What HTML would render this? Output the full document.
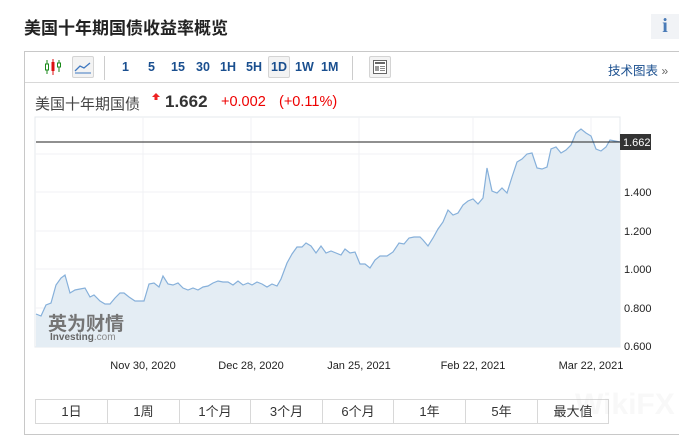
<!DOCTYPE html>
<html><head><meta charset="utf-8"><style>
*{margin:0;padding:0;box-sizing:border-box}
body{width:679px;height:438px;background:#fff;font-family:"Liberation Sans","Noto Sans CJK SC",sans-serif;position:relative;overflow:hidden;color:#333}
.a{position:absolute;white-space:nowrap}
.title{left:24px;top:14px;font-size:17px;font-weight:bold;color:#222}
.info{left:651px;top:14px;width:28px;height:25px;background:#f1f3f6;color:#4a7bb7;font-family:"Liberation Serif",serif;font-size:20px;font-weight:bold;text-align:center;line-height:25px}
.box{left:24px;top:51px;width:656px;height:384px;border:1px solid #c8c8c8}
.tb{left:25px;top:82px;width:654px;height:1px;background:#d8d8d8}
.n{top:60px;font-size:12.5px;font-weight:bold;color:#1a4f8f}
.btn{border:1px solid #d4d4d4;background:#f3f3f3;border-radius:2px}
.sep{width:1px;background:#ccc;top:56px;height:24px}
.q{top:93px;font-size:15px}
.bt{position:absolute;top:399px;height:25px;border:1px solid #d8d8d8;border-right:none;font-size:13px;text-align:center;line-height:23px;color:#333}
.dl{top:360px;font-size:11px;color:#222;transform:translateX(-50%)}
.yl{left:624px;font-size:11px;color:#222}
</style></head><body>
<div class="a title">美国十年期国债收益率概览</div>
<div class="a info">i</div>
<div class="a box"></div>
<div class="a tb"></div>
<svg class="a" style="left:44px;top:58px" width="18" height="18" viewBox="0 0 18 18">
<line x1="3" y1="2" x2="3" y2="16" stroke="#1a8a1a"/><rect x="1.5" y="6" width="3" height="6" fill="#fff" stroke="#1a8a1a"/>
<line x1="9" y1="1" x2="9" y2="17" stroke="#d11"/><rect x="7.5" y="4" width="3" height="9" fill="#d11"/>
<line x1="15" y1="2" x2="15" y2="14" stroke="#1a8a1a"/><rect x="13.5" y="5" width="3" height="4" fill="#fff" stroke="#1a8a1a"/></svg>
<div class="a btn" style="left:72px;top:56px;width:22px;height:22px"></div>
<svg class="a" style="left:74px;top:59px" width="18" height="16"><path d="M1 12 L6 7 L10 9 L16 4" stroke="#3f78c0" fill="none" stroke-width="1.3"/><line x1="1" y1="14" x2="17" y2="14" stroke="#3f78c0"/></svg>
<div class="a sep" style="left:104px"></div>
<div class="a n" style="left:122px">1</div>
<div class="a n" style="left:148px">5</div>
<div class="a n" style="left:171px">15</div>
<div class="a n" style="left:196px">30</div>
<div class="a n" style="left:220px">1H</div>
<div class="a n" style="left:246px">5H</div>
<div class="a btn" style="left:268px;top:56px;width:22px;height:22px"></div>
<div class="a n" style="left:271px">1D</div>
<div class="a n" style="left:295px">1W</div>
<div class="a n" style="left:321px">1M</div>
<div class="a sep" style="left:352px"></div>
<div class="a btn" style="left:369px;top:56px;width:22px;height:22px"></div>
<svg class="a" style="left:373px;top:60px" width="14" height="14"><rect x="0.5" y="0.5" width="13" height="13" fill="#fff" stroke="#666"/><rect x="2" y="2" width="10" height="2" fill="#666"/><rect x="2" y="6" width="4" height="5" fill="#999"/><line x1="7" y1="6.5" x2="12" y2="6.5" stroke="#888"/><line x1="7" y1="8.5" x2="12" y2="8.5" stroke="#888"/><line x1="7" y1="10.5" x2="12" y2="10.5" stroke="#888"/></svg>
<div class="a" style="left:608px;top:60px;font-size:12.5px;color:#1a4f8f">技术图表 <span style="color:#666;font-size:12px">»</span></div>
<div class="a q" style="left:35px;color:#444">美国十年期国债</div>
<svg class="a" style="left:152px;top:93px" width="8" height="8"><path d="M4 0 L8 4 L5.5 4 L5.5 7 L2.5 7 L2.5 4 L0 4Z" fill="#e22"/></svg>
<div class="a q" style="left:165px;top:92px;font-size:17px;font-weight:bold;color:#333">1.662</div>
<div class="a q" style="left:221px;color:#e00;top:94px;font-size:14.5px">+0.002</div>
<div class="a q" style="left:279px;color:#e00;top:94px;font-size:14.5px">(+0.11%)</div>
<svg class="a" style="left:0;top:0" width="679" height="438">
<rect x="35" y="117" width="585" height="230" fill="#fff" stroke="#e4e8ec"/>
<g stroke="#f0f2f4" stroke-width="1">
<line x1="35" y1="154" x2="620" y2="154"/><line x1="35" y1="192" x2="620" y2="192"/><line x1="35" y1="231" x2="620" y2="231"/><line x1="35" y1="269" x2="620" y2="269"/><line x1="35" y1="308" x2="620" y2="308"/>
<line x1="143" y1="117" x2="143" y2="347"/><line x1="251" y1="117" x2="251" y2="347"/><line x1="359" y1="117" x2="359" y2="347"/><line x1="473" y1="117" x2="473" y2="347"/><line x1="591" y1="117" x2="591" y2="347"/></g>
<path d="M36 314 L41 316 L46 305 L51 303 L56 285 L61 278 L65 275 L70 293 L75 290 L80 289 L85 288 L90 297 L94 295 L100 301 L105 304 L110 304 L115 298 L120 293 L124 293 L129 297 L135 301 L144 301 L149 284 L154 283 L159 287 L163 276 L168 284 L173 285 L178 283 L183 288 L188 290 L193 288 L198 290 L203 287 L208 286 L213 283 L218 281 L223 282 L228 282 L233 285 L238 281 L243 285 L248 283 L252 285 L257 282 L262 284 L267 287 L272 284 L277 286 L281 279 L287 263 L292 254 L297 247 L302 247 L306 243 L311 246 L316 253 L321 246 L326 253 L331 251 L336 253 L341 255 L345 249 L350 253 L355 252 L360 264 L365 264 L370 268 L375 260 L380 256 L387 256 L393 252 L399 243 L404 244 L409 238 L414 237 L420 237 L423 240 L428 246 L433 238 L438 229 L443 222 L448 210 L453 215 L458 213 L463 205 L468 201 L473 199 L478 204 L483 198 L487 168 L492 191 L497 193 L502 188 L507 193 L512 177 L517 162 L522 159 L527 154 L532 153 L537 168 L542 169 L547 167 L551 149 L556 147 L561 153 L566 150 L571 145 L576 133 L581 129 L586 133 L591 136 L596 149 L601 151 L606 147 L610 140 L615 141 L620 142 L620 347 L36 347Z" fill="#e4edf4" stroke="none"/>
<path d="M36 314 L41 316 L46 305 L51 303 L56 285 L61 278 L65 275 L70 293 L75 290 L80 289 L85 288 L90 297 L94 295 L100 301 L105 304 L110 304 L115 298 L120 293 L124 293 L129 297 L135 301 L144 301 L149 284 L154 283 L159 287 L163 276 L168 284 L173 285 L178 283 L183 288 L188 290 L193 288 L198 290 L203 287 L208 286 L213 283 L218 281 L223 282 L228 282 L233 285 L238 281 L243 285 L248 283 L252 285 L257 282 L262 284 L267 287 L272 284 L277 286 L281 279 L287 263 L292 254 L297 247 L302 247 L306 243 L311 246 L316 253 L321 246 L326 253 L331 251 L336 253 L341 255 L345 249 L350 253 L355 252 L360 264 L365 264 L370 268 L375 260 L380 256 L387 256 L393 252 L399 243 L404 244 L409 238 L414 237 L420 237 L423 240 L428 246 L433 238 L438 229 L443 222 L448 210 L453 215 L458 213 L463 205 L468 201 L473 199 L478 204 L483 198 L487 168 L492 191 L497 193 L502 188 L507 193 L512 177 L517 162 L522 159 L527 154 L532 153 L537 168 L542 169 L547 167 L551 149 L556 147 L561 153 L566 150 L571 145 L576 133 L581 129 L586 133 L591 136 L596 149 L601 151 L606 147 L610 140 L615 141 L620 142" fill="none" stroke="#86b0da" stroke-width="1.2"/>
<line x1="36" y1="142" x2="620" y2="142" stroke="#222" stroke-width="1"/>
<rect x="620" y="134" width="31" height="16" fill="#333"/>
<text x="623" y="146" font-family="Liberation Sans" font-size="11" fill="#fff">1.662</text>
</svg>
<div class="a" style="left:48px;top:313px;font-size:19px;font-weight:bold;color:#757575;font-family:'Noto Sans CJK SC',sans-serif;line-height:20px">英为财情</div>
<div class="a" style="left:50px;top:332px;font-size:10px;font-weight:bold;color:#666">Investing<span style="font-weight:normal;color:#888">.com</span></div>
<div class="a yl" style="top:187px">1.400</div>
<div class="a yl" style="top:226px">1.200</div>
<div class="a yl" style="top:264px">1.000</div>
<div class="a yl" style="top:303px">0.800</div>
<div class="a yl" style="top:341px">0.600</div>
<div class="a dl" style="left:143px">Nov 30, 2020</div>
<div class="a dl" style="left:251px">Dec 28, 2020</div>
<div class="a dl" style="left:359px">Jan 25, 2021</div>
<div class="a dl" style="left:473px">Feb 22, 2021</div>
<div class="a dl" style="left:591px">Mar 22, 2021</div>
<div class="bt" style="left:35px;width:72px">1日</div>
<div class="bt" style="left:107px;width:72px">1周</div>
<div class="bt" style="left:179px;width:71px">1个月</div>
<div class="bt" style="left:250px;width:72px">3个月</div>
<div class="bt" style="left:322px;width:71px">6个月</div>
<div class="bt" style="left:393px;width:72px">1年</div>
<div class="bt" style="left:465px;width:72px">5年</div>
<div class="bt" style="left:537px;width:72px;border-right:1px solid #d8d8d8">最大值</div>
<div class="a" style="left:575px;top:388px;font-size:30px;font-weight:bold;color:rgba(200,200,200,0.12)">WikiFX</div>
</body></html>
